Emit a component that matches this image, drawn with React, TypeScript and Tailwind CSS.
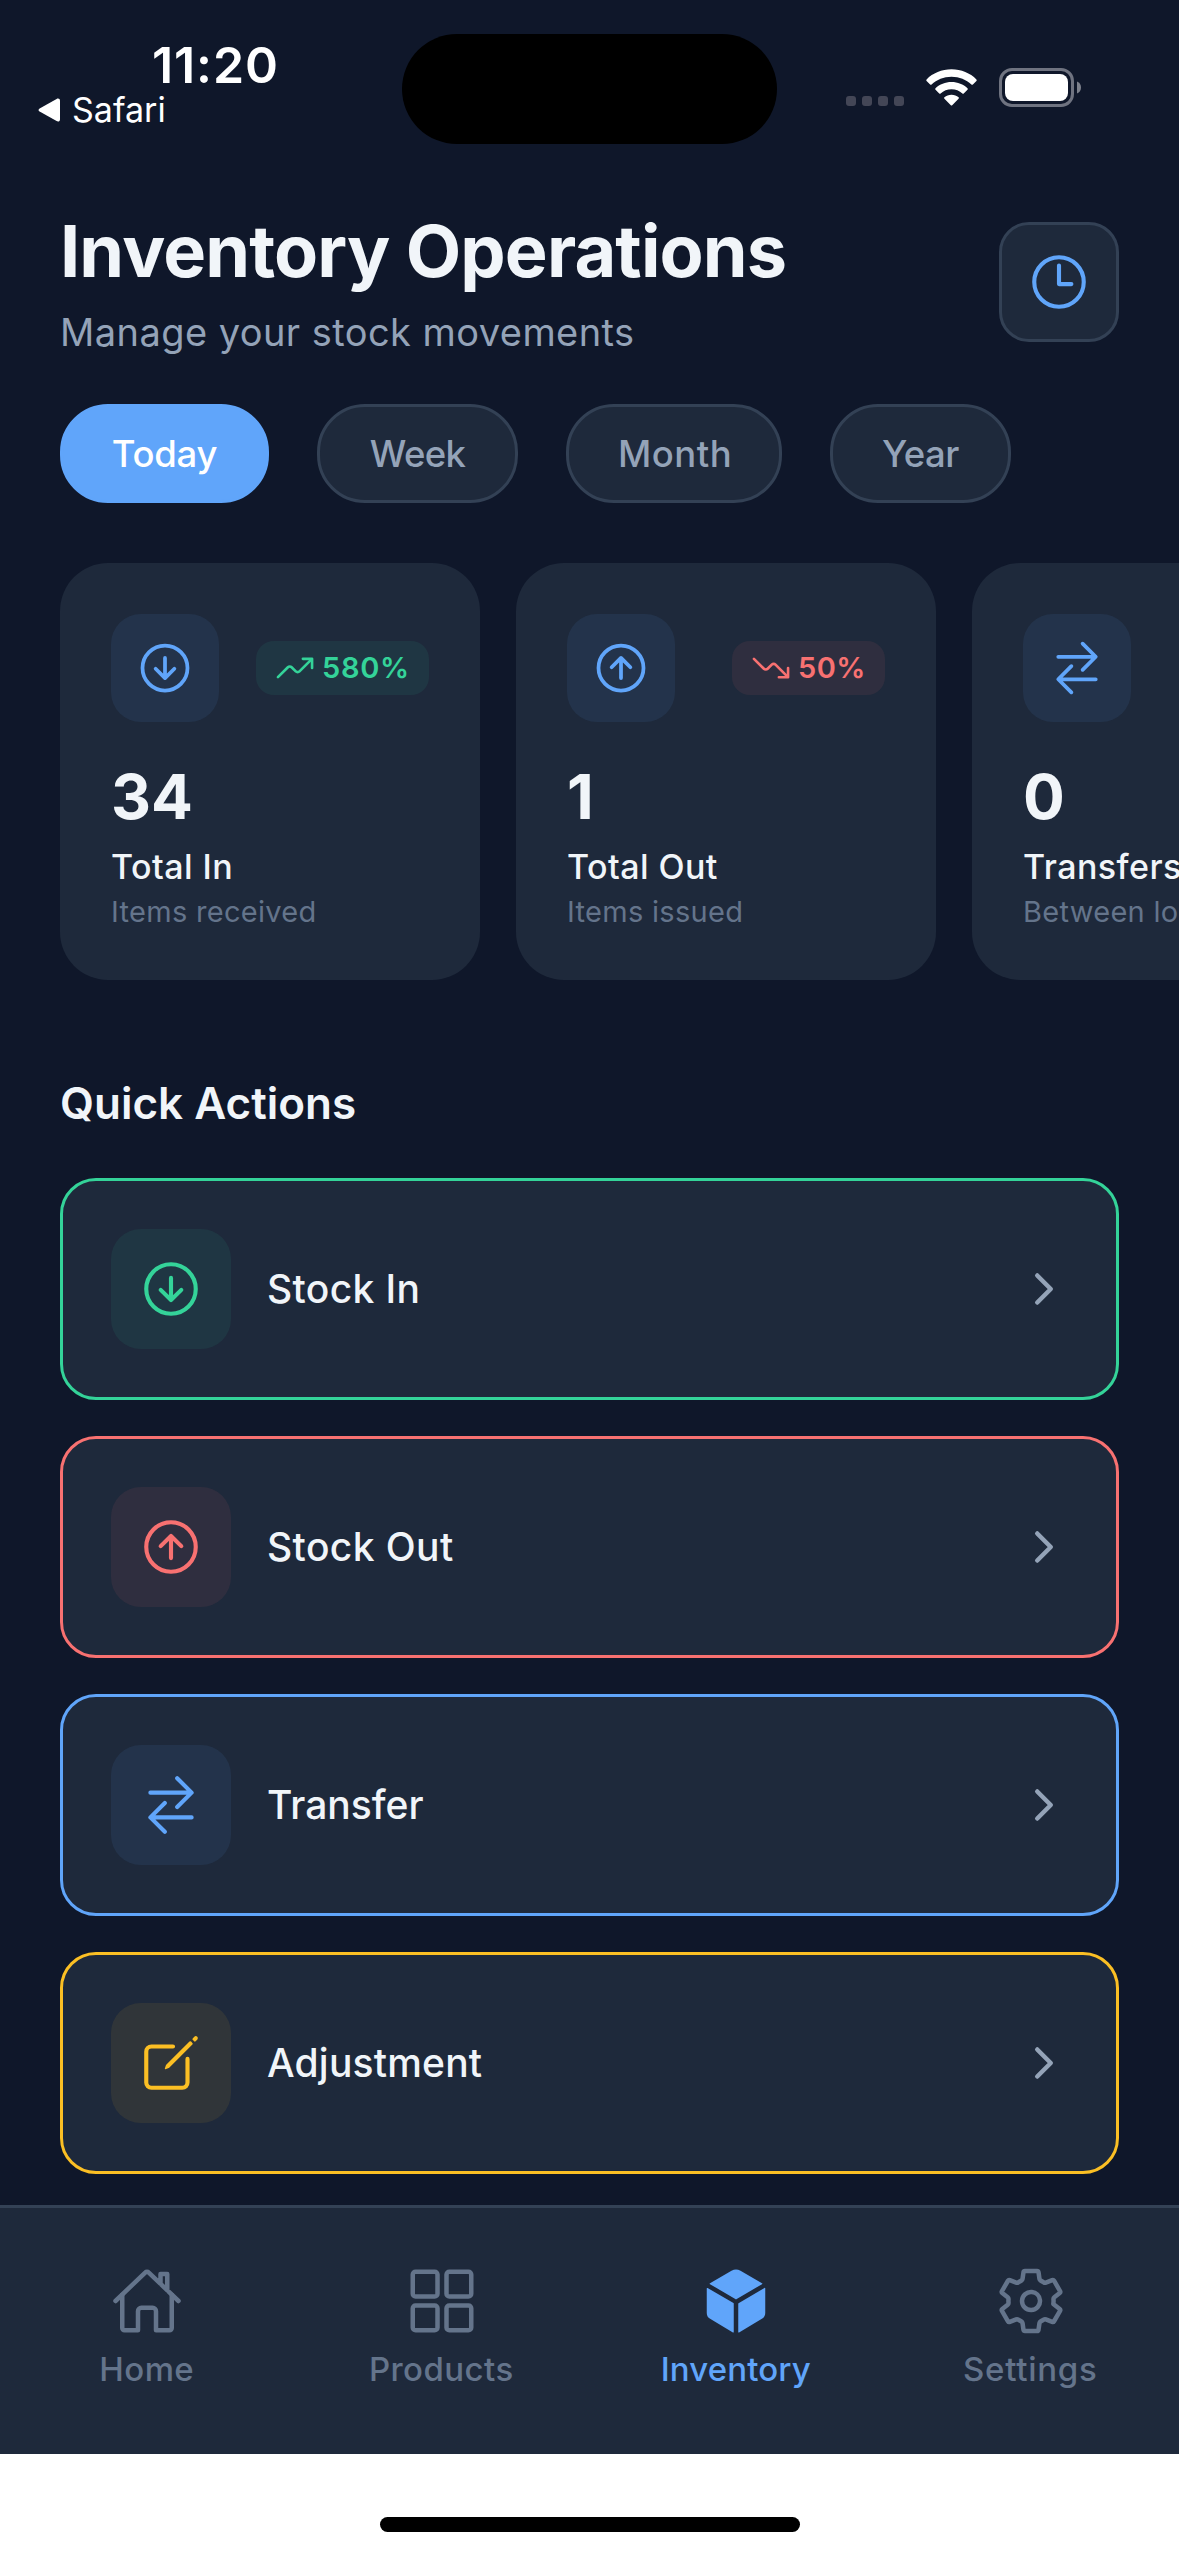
import type { ReactNode } from 'react';
import type { IconType } from 'react-icons';
import {
  IoArrowDownCircleOutline,
  IoArrowUpCircleOutline,
  IoChevronForward,
  IoCreateOutline,
  IoCube,
  IoGridOutline,
  IoHomeOutline,
  IoSettingsOutline,
  IoSwapHorizontal,
  IoTimeOutline,
  IoTrendingDown,
  IoTrendingUp,
} from 'react-icons/io5';

function StatusBar() {
  return (
    <div className="relative flex h-[177px] shrink-0 justify-between text-white">
      <div className="flex flex-col pt-[38px] pl-[38px]">
        <span className="pl-[114px] text-[50px] leading-[54px] font-semibold tracking-[0.9px]">11:20</span>
        <div className="flex items-center gap-[12px]">
          <svg width="22" height="24" viewBox="0 0 22 24" fill="currentColor">
            <path d="M1.6 10.4 18.6 .9C20.4 0 22 .9 22 2.6v18.8c0 1.7-1.6 2.6-3.4 1.7L1.6 13.6C.2 12.7.2 11.3 1.6 10.4Z" />
          </svg>
          <span className="text-[34px] leading-[36px]">Safari</span>
        </div>
      </div>
      <div className="absolute top-[34px] left-[402px] h-[110px] w-[375px] rounded-full bg-black" />
      <div className="mt-[68px] flex h-[39px] items-center pr-[98px]">
        <div className="flex gap-[6px] pt-[27px]">
          {[0, 1, 2, 3].map((i) => (
            <span key={i} className="h-[10px] w-[10px] rounded-[3px] bg-[#434656]" />
          ))}
        </div>
        <svg className="ml-[22px]" width="51" height="38" viewBox="0 0 52 38" fill="white">
          <path d="M26 0C36 0 45 3.9 51.4 10.3c.5.5.5 1 0 1.5l-3.6 3.7c-.4.4-1 .4-1.5 0C41 10.6 34 7.6 26 7.6S11 10.6 5.7 15.500c-.5.4-1.100.4-1.500 0L.6 11.800c-.5-.5-.5-1 0-1.500C7 3.900 16 0 26 0Z" />
          <path d="M26 12.900c6.400 0 12 2.400 16.300 6.300.5.5.5 1 0 1.500l-3.800 3.800c-.4.4-1 .4-1.400 0C34.100 21.900 30.300 20.300 26 20.300s-8.100 1.600-11.100 4.200c-.4.4-1 .4-1.400 0l-3.800-3.800c-.5-.5-.5-1 0-1.500C14 15.300 19.600 12.900 26 12.900Z" />
          <path d="M26 25.800c2.900 0 5.300 1 7.200 2.600.5.4.5 1 0 1.500l-6.500 6.600c-.5.5-.9.500-1.400 0l-6.500-6.600c-.5-.5-.5-1.100 0-1.500 1.900-1.600 4.300-2.600 7.200-2.600Z" />
        </svg>
        <svg className="ml-[22px]" width="82" height="39" viewBox="0 0 82 39" fill="none">
          <rect x="1.500" y="1.500" width="72" height="36" rx="11.500" stroke="#6f7380" strokeWidth="3" />
          <rect x="6" y="6" width="63" height="27" rx="8" fill="white" />
          <path d="M78 13.500c2.600 1 4 3.300 4 6s-1.400 5-4 6Z" fill="#7d818c" />
        </svg>
      </div>
    </div>
  );
}

function Header() {
  return (
    <header className="flex items-center justify-between px-[60px] pt-[32px]">
      <div className="whitespace-nowrap">
        <h1 className="text-[72px] leading-[84px] font-bold tracking-[-0.84px] text-[#f1f5f9]">Inventory Operations</h1>
        <p className="mt-[16px] text-[38px] leading-[46px] tracking-[0.44px] text-[#94a3b8]">
          Manage your stock movements
        </p>
      </div>
      <button className="flex size-[120px] items-center justify-center rounded-[30px] border-[3px] border-[#334155] bg-[#1e293b]">
        <IoTimeOutline size={66} color="#60a5fa" />
      </button>
    </header>
  );
}

const periods = [
  { label: 'Today', active: true, cls: 'w-[209px] tracking-[-0.25px]' },
  { label: 'Week', active: false, cls: 'w-[201px] tracking-[-0.7px]' },
  { label: 'Month', active: false, cls: 'w-[216px] pl-[2px] tracking-[0.5px]' },
  { label: 'Year', active: false, cls: 'w-[181px] tracking-[-0.5px]' },
];

function PeriodTabs() {
  return (
    <div className="mt-[49px] flex gap-[48px] px-[60px]">
      {periods.map((p) => (
        <button
          key={p.label}
          className={`flex h-[99px] items-center justify-center rounded-[48px] border-[3px] pt-[2px] text-[36.5px] leading-[45px] font-medium ${p.cls} ${
            p.active ? 'border-[#60a5fa] bg-[#60a5fa] text-white' : 'border-[#334155] bg-[#1e293b] text-[#94a3b8]'
          }`}
        >
          {p.label}
        </button>
      ))}
    </div>
  );
}

interface StatProps {
  icon: IconType;
  value: string;
  label: string;
  hint: string;
  badge?: ReactNode;
}

function StatCard({ icon: Icon, value, label, hint, badge }: StatProps) {
  return (
    <div className="h-[417px] w-[420px] shrink-0 rounded-[48px] bg-[#1e293b] p-[51px] whitespace-nowrap">
      <div className="flex items-center justify-between">
        <div className="flex size-[108px] items-center justify-center rounded-[30px] bg-[#60a5fa15]">
          <Icon size={60} color="#60a5fa" />
        </div>
        {badge}
      </div>
      <div className="mt-[39px] text-[62px] leading-[72px] font-bold text-[#f1f5f9]">{value}</div>
      <div className="mt-[13px] text-[34px] leading-[42px] font-medium tracking-[0.45px] text-[#f1f5f9]">{label}</div>
      <div className="mt-[6px] text-[29px] leading-[36px] tracking-[0.3px] text-[#64748b]">{hint}</div>
    </div>
  );
}

function Stats() {
  return (
    <div className="mt-[60px] flex gap-[36px] overflow-hidden pl-[60px]">
      <StatCard
        icon={IoArrowDownCircleOutline}
        value="34"
        label="Total In"
        hint="Items received"
        badge={
          <div className="flex h-[54px] w-[173px] items-center gap-[6px] rounded-[18px] bg-[#34d39915] px-[18px] text-[29px] leading-[36px] font-semibold tracking-[0.69px] text-[#34d399]">
            <IoTrendingUp size={42} className="shrink-0" />
            580%
          </div>
        }
      />
      <StatCard
        icon={IoArrowUpCircleOutline}
        value="1"
        label="Total Out"
        hint="Items issued"
        badge={
          <div className="flex h-[54px] w-[153px] items-center gap-[6px] rounded-[18px] bg-[#f8717115] px-[18px] text-[29px] leading-[36px] font-semibold tracking-[0.5px] text-[#f87171]">
            <IoTrendingDown size={42} className="shrink-0" />
            50%
          </div>
        }
      />
      <StatCard icon={IoSwapHorizontal} value="0" label="Transfers" hint="Between locations" />
    </div>
  );
}

const actions = [
  { label: 'Stock In', icon: IoArrowDownCircleOutline, text: 'tracking-[0.35px]', border: 'border-[#34d399]', chip: 'bg-[#34d39915] text-[#34d399]' },
  { label: 'Stock Out', icon: IoArrowUpCircleOutline, text: 'tracking-[0.41px]', border: 'border-[#f87171]', chip: 'bg-[#f8717115] text-[#f87171]' },
  { label: 'Transfer', icon: IoSwapHorizontal, text: 'tracking-[0px]', border: 'border-[#60a5fa]', chip: 'bg-[#60a5fa15] text-[#60a5fa]' },
  { label: 'Adjustment', icon: IoCreateOutline, text: 'tracking-[0.2px]', border: 'border-[#fbbf24]', chip: 'bg-[#fbbf2415] text-[#fbbf24]' },
];

function QuickActions() {
  return (
    <section className="mt-[96px] px-[60px]">
      <h2 className="text-[44px] leading-[54px] font-semibold text-[#f1f5f9]">Quick Actions</h2>
      <div className="mt-[48px] flex flex-col gap-[36px]">
        {actions.map(({ label, icon: Icon, text, border, chip }) => (
          <button
            key={label}
            className={`flex h-[222px] items-center rounded-[36px] border-[3px] bg-[#1e293b] px-[48px] ${border}`}
          >
            <span className={`flex size-[120px] items-center justify-center rounded-[30px] ${chip}`}>
              <Icon size={66} />
            </span>
            <span className={`ml-[36px] flex-1 text-left text-[39px] leading-[48px] font-medium text-[#f1f5f9] ${text}`}>
              {label}
            </span>
            <IoChevronForward size={48} color="#94a3b8" />
          </button>
        ))}
      </div>
    </section>
  );
}

const tabs = [
  { label: 'Home', icon: IoHomeOutline, cls: 'text-[#64748b] tracking-[0.4px]' },
  { label: 'Products', icon: IoGridOutline, cls: 'text-[#64748b] tracking-[0.43px]' },
  { label: 'Inventory', icon: IoCube, cls: 'text-[#60a5fa] tracking-[0.12px]' },
  { label: 'Settings', icon: IoSettingsOutline, cls: 'text-[#64748b] tracking-[0.73px]' },
];

function TabBar() {
  return (
    <nav className="flex h-[249px] shrink-0 border-t-[3px] border-[#334155] bg-[#1e293b] pt-[57px] pr-px">
      {tabs.map(({ label, icon: Icon, cls }) => (
        <div key={label} className={`flex flex-1 flex-col items-center ${cls}`}>
          <Icon size={72} />
          <span className="mt-[12px] pr-px text-[33px] leading-[40px] font-medium">{label}</span>
        </div>
      ))}
    </nav>
  );
}

export default function App() {
  return (
    <div className="flex h-[2556px] w-[1179px] flex-col overflow-hidden bg-white font-['Inter',sans-serif]">
      <div className="h-[2205px] shrink-0 overflow-hidden bg-[#0f172a]">
        <StatusBar />
        <Header />
        <PeriodTabs />
        <Stats />
        <QuickActions />
      </div>
      <TabBar />
      <div className="flex flex-1 items-end justify-center pb-[24px]">
        <div className="h-[15px] w-[420px] rounded-full bg-black" />
      </div>
    </div>
  );
}
